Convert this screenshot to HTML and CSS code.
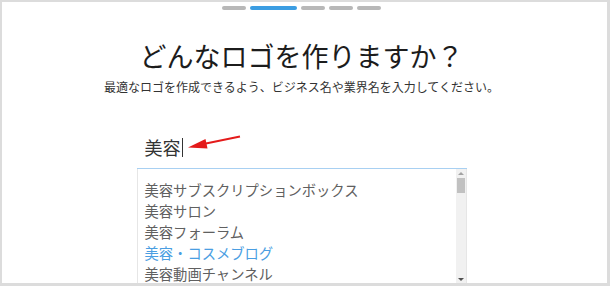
FILE: index.html
```html
<!DOCTYPE html>
<html lang="ja">
<head>
<meta charset="UTF-8">
<meta name="viewport" content="width=device-width, initial-scale=1.0">
<title>ロゴ作成</title>
<link rel="stylesheet" href="styles.css">
</head>
<body>

<div class="frame">
    <div class="steps">
        <span class="step"></span>
        <span class="step current"></span>
        <span class="step"></span>
        <span class="step"></span>
        <span class="step"></span>
    </div>

    <h1>どんなロゴを作りますか？</h1>
    <p class="lead">最適なロゴを作成できるよう、ビジネス名や業界名を入力してください。</p>

    <div class="search">
        <div class="search-input">
            <span class="typed">美容</span><span class="caret"></span>
            <!-- annotation arrow -->
            <svg class="pointer" width="110" height="20" viewBox="0 0 110 20">
                <line x1="103" y1="1.5" x2="64" y2="9.5" stroke="#e41b1b" stroke-width="2"/>
                <polygon points="51,12.5 68.5,4 70.5,13.5" fill="#e41b1b"/>
            </svg>
        </div>

        <div class="suggestions">
            <ul class="suggestion-list">
                <li>美容サブスクリプションボックス</li>
                <li>美容サロン</li>
                <li>美容フォーラム</li>
                <li class="active">美容・コスメブログ</li>
                <li>美容動画チャンネル</li>
            </ul>
            <div class="scrollbar">
                <span class="arrow-up"></span>
                <span class="thumb"></span>
                <span class="track"></span>
                <span class="arrow-down"></span>
            </div>
        </div>
    </div>
</div>

</body>
</html>
```

FILE: styles.css
```css
body {
    margin: 0;
    font-family: "Noto Sans CJK JP", "Noto Sans", sans-serif;
    background-color: #fff;
}

.frame {
    height: 286px;
    box-sizing: border-box;
    border-style: solid;
    border-color: #dcdcdc;
    border-width: 2px 3px 3px 2px;
    padding-right: 6px;
    overflow: hidden;
}

.steps {
    display: flex;
    justify-content: center;
    gap: 4px;
    padding-top: 4px;
}

.step {
    width: 24px;
    height: 4px;
    border-radius: 2px;
    background-color: #b8b8b8;
}

.step.current {
    width: 47px;
    background-color: #3b9de2;
}

h1 {
    margin: 30px 0 0;
    font-size: 27px;
    line-height: 32px;
    font-weight: normal;
    text-align: center;
    color: #1c1c1c;
}

.lead {
    margin: 7px 0 0;
    font-size: 12px;
    line-height: 16px;
    text-align: center;
    color: #333;
}

.search {
    width: 330px;
    margin: 40px auto 0;
}

.search-input {
    position: relative;
    height: 34px;
    box-sizing: border-box;
    padding-left: 8px;
    border-bottom: 1px solid #a8d0f2;
    display: flex;
    align-items: flex-start;
}

.typed {
    font-size: 18px;
    line-height: 24px;
    color: #333;
}

.caret {
    width: 1px;
    height: 19px;
    margin-top: 3px;
    margin-left: 1px;
    background-color: #333;
}

.pointer {
    position: absolute;
    left: 0;
    top: 0;
}

.suggestions {
    display: flex;
    height: 120px;
    border-left: 1px solid #e6e6e6;
    border-right: 1px solid #e6e6e6;
}

.suggestion-list {
    flex: 1;
    list-style: none;
    margin: 0;
    padding: 10px 0 0 7px;
}

.suggestion-list li {
    font-size: 14.3px;
    line-height: 21px;
    color: #606060;
}

.suggestion-list li.active {
    color: #4a9ee2;
}

.scrollbar {
    width: 10px;
    background-color: #f1f1f1;
    display: flex;
    flex-direction: column;
    align-items: center;
}

.arrow-up {
    margin-top: 3px;
    border-left: 3px solid transparent;
    border-right: 3px solid transparent;
    border-bottom: 3px solid #a3a3a3;
}

.thumb {
    width: 8px;
    height: 15px;
    margin-top: 3px;
    background-color: #c1c1c1;
}

.track {
    flex: 1;
}

.arrow-down {
    margin-bottom: 8px;
    border-left: 3px solid transparent;
    border-right: 3px solid transparent;
    border-top: 3px solid #505050;
}
```
